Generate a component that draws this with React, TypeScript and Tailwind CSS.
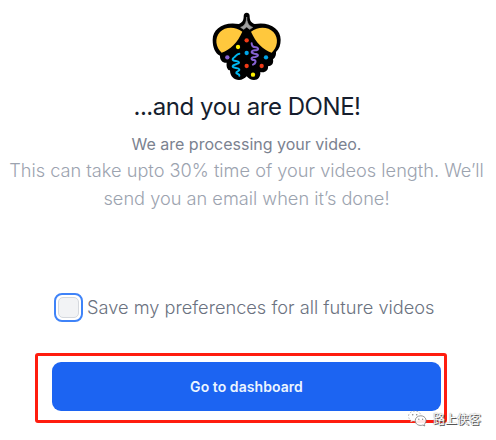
function PartyBug() {
  return (
    <svg width="92" height="80" viewBox="0 0 276 240" fill="none" className="block">
      <path
        d="M140 23C134 23 131 27 131 34C131 47 127 53 116 57C70 49 38 72 38 104C38 129 46 145 60 152C59 165 68 174 80 173C78 187 84 196 90 196C90 214 102 225 117 225C127 225 134 220 140 214C146 221 153 225 162 225C175 225 182 215 181 201C194 205 206 197 204 184C218 183 221 173 219 163C227 157 229 148 228 141C238 132 242 119 242 104C242 72 210 49 164 57C153 53 149 47 149 34C149 27 146 23 140 23Z"
        fill="#000"
      />
      <path d="M140 36C140 52 134 63 122 67L131 73L140 66L149 73L158 67C146 63 140 52 140 36Z" fill="#a0a0a0" stroke="#a0a0a0" strokeWidth="2" strokeLinejoin="round" />
      <path d="M127 80C105 63 75 65 60 81C42 100 48 128 65 143C90 135 113 112 127 80Z" fill="#ffc83d" />
      <path d="M153 80C175 63 205 65 220 81C238 100 232 128 215 143C190 135 167 112 153 80Z" fill="#ffc83d" />
      <path d="M118 146C112 146 108 152 104 156C98 160 96 164 100 166C106 169 115 166 117 172C119 178 98 177 98 184C98 191 115 187 118 193C120 199 107 199 109 204C111 208 119 206 118 212" stroke="#00b8f0" strokeWidth="6" strokeLinecap="round" />
      <path d="M155 115C155 122 159 127 167 127C178 128 176 136 165 136C153 137 151 144 163 146C177 147 177 154 165 156C151 157 152 165 162 165C169 166 168 175 159 179" stroke="#8661d1" strokeWidth="6" strokeLinecap="round" />
      <circle cx="140" cy="106" r="6.5" fill="#f03a17" />
      <circle cx="114" cy="126" r="6.5" fill="#fff100" />
      <circle cx="82" cy="157" r="6.5" fill="#8661d1" />
      <circle cx="140" cy="144" r="6.5" fill="#00a5e8" />
      <circle cx="198" cy="157" r="6.5" fill="#00a5e8" />
      <circle cx="140" cy="183" r="6.5" fill="#f03a17" />
      <circle cx="185" cy="183" r="6.5" fill="#f03a17" />
      <circle cx="159" cy="209" r="6.5" fill="#fff100" />
    </svg>
  );
}

function Watermark() {
  return (
    <div className="absolute left-[407px] top-[408px] flex h-[22px] items-center gap-[6px]">
      <svg width="20" height="20" viewBox="0 0 20 20" className="block">
        <path d="M8 2C4.2 2 1.5 4.3 1.5 7.2C1.5 9 2.5 10.4 4 11.3L3.5 13.2L5.8 12.1C9.5 12.8 14 11 14 7.2C14 4.3 11.5 2 8 2Z" fill="#fff" stroke="#999" strokeWidth=".6" strokeDasharray="2 1.5" />
        <path d="M13.7 6.8C10.5 6.8 8.2 8.9 8.2 11.7C8.2 15.4 12.2 17.2 15.8 16.1L17.8 17L17.3 15.3C20.8 12.2 18.8 6.8 13.7 6.8Z" fill="#fff" fillOpacity=".9" stroke="#777" strokeWidth=".8" />
        <circle cx="5.7" cy="5.8" r=".8" fill="#888" />
        <circle cx="9.7" cy="5.8" r=".8" fill="#888" />
        <circle cx="11.8" cy="10.3" r=".7" fill="#888" />
        <circle cx="15.6" cy="10.3" r=".7" fill="#888" />
      </svg>
      <span className="whitespace-nowrap font-['Noto_Sans_CJK_SC',sans-serif] text-[12px] leading-[20px] text-white [text-shadow:1px_1px_0_#555,0_0_1px_#555]">
        路上侠客
      </span>
    </div>
  );
}

export default function App() {
  return (
    <main className="relative flex h-[440px] w-[496px] flex-col items-center overflow-hidden bg-white font-['Inter',sans-serif]">
      <div className="flex h-[88px] w-full pl-[200px] pt-[5px]">
        <PartyBug />
      </div>
      <h1 className="mt-[3px] h-[32px] whitespace-nowrap pr-[2px] text-[24px] leading-[32px] tracking-[-0.45px] text-[#161e2e]">...and you are DONE!</h1>
      <p className="mt-[9px] h-[24px] whitespace-nowrap pr-[3px] text-[16px] leading-[24px] text-[#7b8290]">We are processing your video.</p>
      <p className="h-[56px] whitespace-nowrap pr-[3px] text-center text-[18.2px] font-light leading-[28px] text-[#9ca3af]">
        This can take upto 30% time of your videos length. We’ll
        <br />
        send you an email when it’s done!
      </p>
      <label className="mt-[81px] flex h-[28px] w-full items-center pl-[54px]">
        <span className="flex size-[29px] shrink-0 items-center justify-center rounded-[8px] border-2 border-[#3f83f8] bg-white">
          <span className="size-[21px] rounded-[5px] border border-[#d5d8dd] bg-[#f2f3f5]" />
        </span>
        <span className="ml-[4px] whitespace-nowrap text-[18.2px] font-light leading-[28px] tracking-[0.01px] text-[#6b7280]">Save my preferences for all future videos</span>
      </label>
      <div className="mt-[32px] flex h-[70px] w-full pl-[35px]">
        <div className="h-[70px] w-[412px] rounded-[3px] border-[3px] border-[#ff1d0f] pl-[14px] pt-[6px]">
          <button className="block h-[49px] w-[389px] rounded-[9px] bg-[#1c64f2] text-[14px] font-semibold leading-[49px] tracking-[0.06px] text-[#ebf5ff]">Go to dashboard</button>
        </div>
      </div>
      <Watermark />
    </main>
  );
}
